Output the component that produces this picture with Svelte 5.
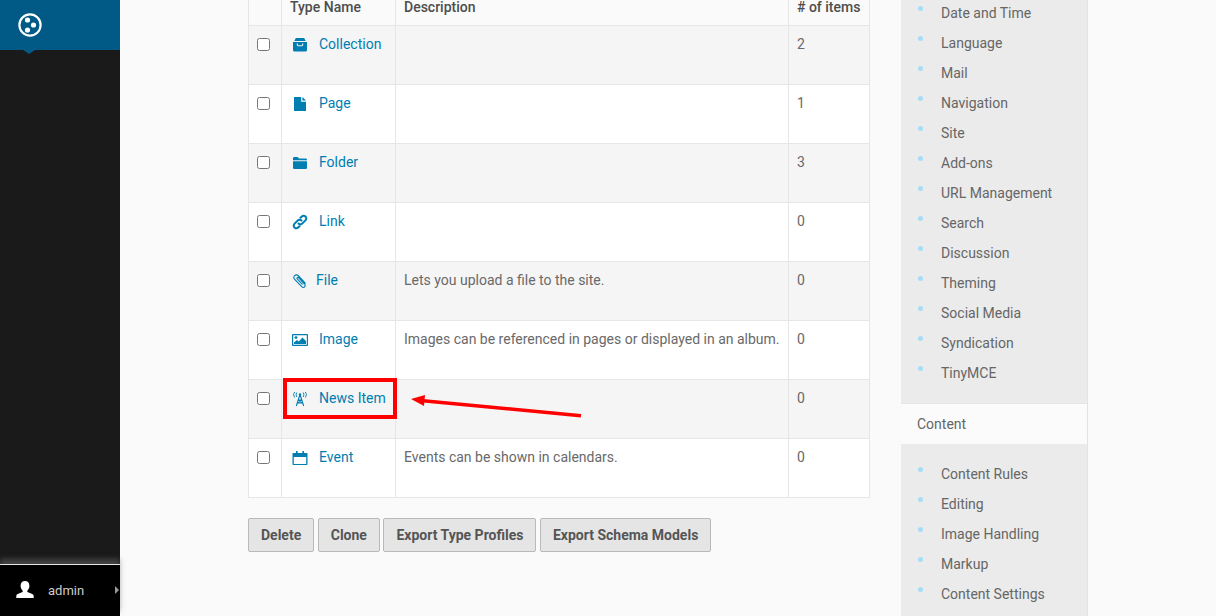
<script>
    const types = [
        { name: 'Collection', icon: 'collection', desc: '', count: 2 },
        { name: 'Page', icon: 'page', desc: '', count: 1 },
        { name: 'Folder', icon: 'folder', desc: '', count: 3 },
        { name: 'Link', icon: 'link', desc: '', count: 0 },
        { name: 'File', icon: 'file', desc: 'Lets you upload a file to the site.', count: 0 },
        { name: 'Image', icon: 'image', desc: 'Images can be referenced in pages or displayed in an album.', count: 0 },
        { name: 'News Item', icon: 'news', desc: '', count: 0 },
        { name: 'Event', icon: 'event', desc: 'Events can be shown in calendars.', count: 0 }
    ];
    const general = ['Date and Time', 'Language', 'Mail', 'Navigation', 'Site', 'Add-ons', 'URL Management', 'Search', 'Discussion', 'Theming', 'Social Media', 'Syndication', 'TinyMCE'];
    const content = ['Content Rules', 'Editing', 'Image Handling', 'Markup', 'Content Settings'];
    const buttons = ['Delete', 'Clone', 'Export Type Profiles', 'Export Schema Models'];
</script>

<div class="page">
    <aside class="toolbar">
        <div class="logo">
            <svg width="26" height="26" viewBox="0 0 26 26">
                <circle cx="13" cy="13" r="10.6" fill="none" stroke="#fff" stroke-width="2.2" />
                <circle cx="10.5" cy="8" r="2.6" fill="#fff" />
                <circle cx="16.5" cy="13" r="2.6" fill="#fff" />
                <circle cx="10.5" cy="18" r="2.6" fill="#fff" />
            </svg>
        </div>
        <div class="fill"></div>
        <div class="user">
            <svg class="avatar" width="20" height="20" viewBox="0 0 20 20">
                <path d="M10 1c2.800 0 4.400 2 4.400 4.800 0 2-.8 3.700-1.900 4.700-.4.500-.3 1.400.4 1.700 2.400 1 5.400 1.600 5.800 3.600V18H1.300v-2.200c.4-2 3.400-2.600 5.800-3.600.7-.3.800-1.200.4-1.700C6.400 9.500 5.600 7.800 5.600 5.800 5.600 3 7.200 1 10 1z" fill="#fff" />
            </svg>
            <span>admin</span>
            <i class="caret"></i>
        </div>
    </aside>

    <main class="content">
        <table>
            <thead>
                <tr>
                    <th class="check"></th>
                    <th class="type">Type Name</th>
                    <th>Description</th>
                    <th class="count"># of items</th>
                </tr>
            </thead>
            <tbody>
                {#each types as t}
                    <tr>
                        <td class="check"><input type="checkbox" /></td>
                        <td class="type">
                            <a href="#top" class:short={t.icon === 'file'}>
                                <svg class="icon" width="16" height="16" viewBox="0 0 16 16">
                                    {#if t.icon === 'collection'}
                                        <path d="M3.800 1h8.400l1.500 3H2.300z" />
                                        <path fill-rule="evenodd" d="M1 5h14v8c0 .8-.6 1.500-1.400 1.500H2.400C1.600 14.500 1 13.800 1 13zM4.800 6.500v1.800l1 1h4.400l1-1V6.500h-1.100v1.700H5.900V6.500z" />
                                    {:else if t.icon === 'page'}
                                        <path d="M2 1h7.200v4.800H14V15H2zM10.400 1L14 4.600h-3.600z" />
                                    {:else if t.icon === 'folder'}
                                        <path d="M1 3.300C1 2.600 1.500 2 2.200 2h3.500l1.300 1.600h6.700c.7 0 1.300.6 1.300 1.300v.3H1z" />
                                        <path d="M1 6.200h14v6.500c0 .7-.6 1.300-1.300 1.300H2.300C1.600 14 1 13.400 1 12.700z" />
                                    {:else if t.icon === 'link'}
                                        <g fill="none" stroke="currentColor" stroke-width="2" stroke-linecap="round">
                                            <path d="M6.500 9.500c1.300 1.300 2.900.9 3.900-.1l3-3c1.200-1.200 1.200-2.800.1-3.800s-2.700-1.100-3.900.1l-1.100 1.100" />
                                            <path d="M9.500 6.500C8.200 5.200 6.600 5.600 5.600 6.600l-3 3c-1.200 1.200-1.200 2.800-.1 3.800s2.700 1.100 3.900-.1l1.100-1.100" />
                                        </g>
                                    {:else if t.icon === 'file'}
                                        <path class="line" d="M13.500 10.500L6.500 3C5.300 1.700 3.700 1.700 2.600 2.700s-1 2.400.1 3.600l7 7.400c.9.900 2.100 1 2.900.2s.8-2-.1-2.800L6.800 4.800c-.5-.5-1.100-.5-1.500-.1s-.4 1 .1 1.500l5.200 5.400" />
                                    {:else if t.icon === 'image'}
                                        <path fill-rule="evenodd" d="M0 3c0-.6.400-1 1-1h14c.6 0 1 .4 1 1v10c0 .6-.4 1-1 1H1c-.6 0-1-.4-1-1zm1.200.2v9.600h13.600V3.200z" />
                                        <circle cx="4" cy="5.600" r="1.400" />
                                        <path d="M2 12v-1.500l3-2.500 1.800 1.500L10.500 5.500l3.500 3.500V12z" />
                                    {:else if t.icon === 'news'}
                                        <g class="line">
                                            <path d="M8 3.500L4.300 15M8 3.500L11.700 15M6.300 9h3.400M5.400 12h5.200M6.300 9l4.300 3M9.700 9l-4.300 3" />
                                            <path class="thin" d="M4.800 1.500a4 4 0 0 0 0 4.500M11.200 1.500a4 4 0 0 1 0 4.500M2.600 1l-1.100 2.600L2.600 6.500M13.400 1l1.100 2.600-1.100 2.900" />
                                        </g>
                                        <circle cx="8" cy="3.500" r="1.200" />
                                    {:else if t.icon === 'event'}
                                        <path fill-rule="evenodd" d="M1.500 3H4V1h1.600v2h4.800V1H12v2h2.500c.5 0 1 .4 1 1v10c0 .6-.5 1-1 1h-13c-.5 0-1-.4-1-1V4c0-.6.500-1 1-1zm.3 4v6.900h12.400V7z" />
                                    {/if}
                                </svg>
                                <span>{t.name}</span>
                            </a>
                            {#if t.icon === 'news'}
                                <div class="highlight"></div>
                            {/if}
                        </td>
                        <td class="desc">{t.desc}</td>
                        <td class="num">{t.count}</td>
                    </tr>
                {/each}
            </tbody>
        </table>

        <svg class="arrow" width="176" height="24" viewBox="0 0 176 24">
            <path d="M170 20.700L12 5.800" stroke="#f00" stroke-width="3.500" fill="none" />
            <path d="M0 4L14 0l-1 11z" fill="#f00" />
        </svg>

        <div class="actions">
            {#each buttons as b}
                <button>{b}</button>
            {/each}
        </div>
    </main>

    <nav class="settings">
        <ul>
            {#each general as item}
                <li>{item}</li>
            {/each}
        </ul>
        <div class="section">Content</div>
        <ul class="second">
            {#each content as item}
                <li>{item}</li>
            {/each}
        </ul>
    </nav>
</div>

<style>
    :global(body) {
        margin: 0;
        background: #fafafa;
    }

    .page {
        display: flex;
        width: 1216px;
        height: 616px;
        overflow: hidden;
        font-family: Roboto, sans-serif;
        font-size: 14px;
        color: #696969;
    }

    .toolbar {
        width: 120px;
        flex: none;
        display: flex;
        flex-direction: column;
        background: #1a1a1a;
    }

    .logo {
        position: relative;
        height: 50px;
        background: #005a85;
        padding-left: 17px;
        box-sizing: border-box;
        display: flex;
        align-items: center;
    }

    .logo svg {
        margin-top: -1px;
    }

    .logo::after {
        content: '';
        position: absolute;
        left: 23px;
        top: 50px;
        border: 6px solid transparent;
        border-top: 4px solid #005a85;
        border-bottom: 0;
    }

    .fill {
        flex: 1;
    }

    .user {
        height: 52px;
        flex: none;
        box-sizing: border-box;
        background: #000;
        border-top: 1px solid #e6e6e6;
        box-shadow: 0 -5px 5px rgba(110, 110, 110, 0.5);
        display: flex;
        align-items: center;
        padding: 0 0 1px 15px;
        color: #ccc;
        font-size: 13px;
        position: relative;
    }

    .avatar {
        margin-right: 13px;
    }

    .caret {
        position: absolute;
        right: 1px;
        top: 21px;
        border: 4px solid transparent;
        border-left: 4px solid #999;
        border-right: 0;
    }

    .content {
        position: relative;
        width: 622px;
        flex: none;
        margin-left: 128px;
    }

    table {
        width: 622px;
        border-collapse: collapse;
        table-layout: fixed;
    }

    th {
        height: 25px;
        padding: 0 8px 10px;
        box-sizing: border-box;
        text-align: left;
        font-weight: 500;
        font-size: 14px;
        line-height: 15px;
        color: #4d4d4d;
        border: 1px solid #e6e6e6;
        border-top: 0;
        vertical-align: top;
    }

    td {
        height: 59px;
        padding: 10px 8px 0;
        box-sizing: border-box;
        vertical-align: top;
        border: 1px solid #e6e6e6;
        background: #fff;
        line-height: 17px;
    }

    tbody tr:nth-child(1) td,
    tbody tr:nth-child(3) td,
    tbody tr:nth-child(5) td,
    tbody tr:nth-child(7) td {
        background: #f5f5f5;
    }

    .check {
        width: 33px;
    }

    .type {
        width: 114px;
        position: relative;
        white-space: nowrap;
    }

    .count {
        width: 81px;
    }

    .desc {
        white-space: nowrap;
    }

    td.check {
        padding: 12px 0 0 8px;
    }

    input {
        display: block;
        width: 13px;
        height: 13px;
        margin: 0;
    }

    a {
        display: flex;
        align-items: center;
        gap: 11px;
        color: #007eb1;
        text-decoration: none;
        margin-left: 2px;
    }

    a.short {
        gap: 8px;
    }

    .icon {
        flex: none;
        fill: currentColor;
    }

    .line,
    .line path {
        fill: none;
        stroke: currentColor;
        stroke-width: 1.100;
    }

    .line .thin {
        stroke-width: 0.900;
    }

    .highlight {
        position: absolute;
        left: 1px;
        top: -2px;
        width: 106px;
        height: 33px;
        border: 4px solid #f00;
        z-index: 2;
    }

    .arrow {
        position: absolute;
        left: 163px;
        top: 395px;
        z-index: 3;
    }

    .actions {
        display: flex;
        gap: 3.500px;
        margin-top: 20px;
    }

    button {
        height: 34px;
        padding: 0 12px;
        background: #e5e5e5;
        border: 1px solid #b9b9b9;
        border-radius: 2px;
        font-family: Roboto, sans-serif;
        font-size: 14px;
        font-weight: 700;
        color: #555;
    }

    .settings {
        width: 187px;
        flex: none;
        margin-left: 31px;
        background: #ebebeb;
        border-right: 1px solid #e3e3e3;
        box-sizing: border-box;
        color: #666;
    }

    ul {
        list-style: none;
        margin: 0;
        padding: 0 0 13px 40px;
    }

    .second {
        padding-top: 17px;
    }

    li {
        position: relative;
        height: 30px;
        line-height: 27px;
    }

    li::before {
        content: '';
        position: absolute;
        left: -23px;
        top: 6px;
        width: 5px;
        height: 5px;
        border-radius: 50%;
        background: #a6dcf5;
    }

    .section {
        height: 41px;
        line-height: 40px;
        box-sizing: border-box;
        padding-left: 16px;
        background: #fbfbfb;
        border-top: 1px solid #e6e6e6;
    }
</style>
